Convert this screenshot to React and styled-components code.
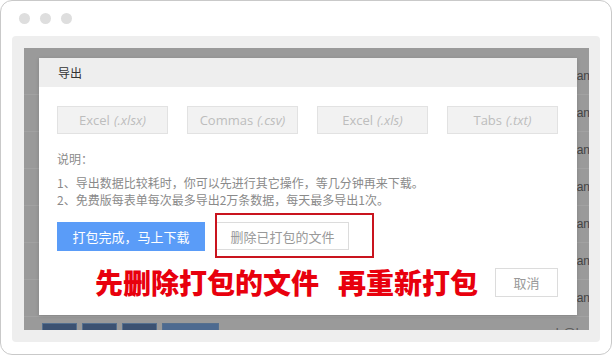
import React from 'react'
import styled, { createGlobalStyle } from 'styled-components'

const GlobalStyle = createGlobalStyle`
    html, body {
        margin: 0;
        padding: 0;
        background: #fff;
    }
    body {
        font-family: "Noto Sans CJK SC", "Noto Sans", sans-serif;
    }
`

const Frame = styled.div`
    width: 612px;
    height: 355px;
    box-sizing: border-box;
    border: 1px solid #c9c9c9;
    border-radius: 12px;
    background: #fff;
    display: flex;
    flex-direction: column;
    overflow: hidden;
`

const TitleBar = styled.div`
    height: 35px;
    flex: none;
    display: flex;
    align-items: center;
    gap: 10px;
    padding-left: 18px;
`

const Dot = styled.span`
    width: 11px;
    height: 11px;
    border-radius: 50%;
    background: #dedede;
`

const Panel = styled.div`
    margin: 0 11px;
    height: 306px;
    box-sizing: border-box;
    padding: 12px 11px 12px 12px;
    background: #eeeeee;
    border-radius: 4px;
`

const Screen = styled.div`
    position: relative;
    height: 282px;
    background: #9a9a9a;
    overflow: hidden;
    padding-top: 10px;
    box-sizing: border-box;
`

const Row = styled.div`
    height: 37px;
    box-sizing: border-box;
    border-bottom: 1px solid #a2a2a2;
    display: flex;
    align-items: center;
    justify-content: flex-end;
    font-family: "Liberation Sans", sans-serif;
    font-size: 12px;
    color: #444;
    margin-right: -1px;
`

const Toolbar = styled.div`
    margin-top: 6px;
    display: flex;
    align-items: flex-start;
    padding-left: 18px;
    gap: 5px;
    height: 24px;
`

const ToolButton = styled.div`
    width: ${p => p.$w}px;
    height: 24px;
    background: ${p => (p.$light ? '#4d6a90' : '#3c5272')};
    border: 1px solid #55708f;
    box-sizing: border-box;
`

const ToolText = styled.span`
    margin-left: 100px;
    margin-top: 3px;
    font-size: 13px;
    color: #555;
`

const ToolIcons = styled.span`
    margin-left: auto;
    margin-right: 10px;
    margin-top: 2px;
    font-size: 13px;
    color: #555;
    font-family: "Liberation Sans", sans-serif;
`

const Dialog = styled.div`
    position: absolute;
    left: 15px;
    top: 10px;
    width: 538px;
    height: 257px;
    background: #fff;
    box-shadow: 0 1px 4px rgba(0, 0, 0, 0.15);
    display: flex;
    flex-direction: column;
`

const DialogHeader = styled.div`
    height: 29px;
    flex: none;
    background: #eeeeee;
    padding-left: 19px;
    display: flex;
    align-items: center;
    font-size: 12px;
    color: #333;
`

const DialogBody = styled.div`
    position: relative;
    padding: 19px 19px 0 18px;
`

const FormatGrid = styled.div`
    display: grid;
    grid-template-columns: repeat(4, 111px);
    column-gap: 19px;
`

const FormatButton = styled.div`
    height: 28px;
    box-sizing: border-box;
    background: #f2f2f2;
    border: 1px solid #e2e2e2;
    display: flex;
    align-items: center;
    justify-content: center;
    gap: 4px;
    font-family: "Open Sans", "Noto Sans", sans-serif;
    font-size: 13px;
    color: #bdbdbd;

    em {
        font-style: italic;
    }
`

const Notes = styled.div`
    margin-top: 16px;
    font-size: 12px;
    line-height: 17px;
    color: #8a8a8a;
`

const NotesTitle = styled.div`
    margin-bottom: 7px;
`

const Actions = styled.div`
    margin-top: 14px;
    display: flex;
    align-items: flex-start;
    gap: 11px;
`

const PrimaryButton = styled.div`
    width: 148px;
    height: 29px;
    background: #5a9cf8;
    color: #fff;
    font-size: 13px;
    display: flex;
    align-items: center;
    justify-content: center;
`

const GhostButton = styled.div`
    width: ${p => p.$w}px;
    height: ${p => p.$h}px;
    box-sizing: border-box;
    border: 1px solid #dcdcdc;
    background: #fff;
    color: #999;
    font-size: 13px;
    display: flex;
    align-items: center;
    justify-content: center;
`

const Mark = styled.div`
    position: absolute;
    left: 176px;
    top: 126px;
    width: 159px;
    height: 45px;
    box-sizing: border-box;
    border: 2px solid #c9141e;
`

const Footer = styled.div`
    margin-top: 17px;
    display: flex;
    align-items: center;
`

const Hint = styled.div`
    margin-left: 38px;
    font-size: 28px;
    font-weight: 900;
    color: #e8000d;
    line-height: 29px;
    display: flex;
    gap: 19px;
`

const Spacer = styled.div`
    flex: 1;
`

const formats = [
    ['Excel', '(.xlsx)'],
    ['Commas', '(.csv)'],
    ['Excel', '(.xls)'],
    ['Tabs', '(.txt)'],
]

export default function App() {
    return (
        <>
            <GlobalStyle />
            <Frame>
                <TitleBar>
                    <Dot />
                    <Dot />
                    <Dot />
                </TitleBar>
                <Panel>
                    <Screen>
                        {Array.from({ length: 7 }).map((_, i) => (
                            <Row key={i}>Jordan</Row>
                        ))}
                        <Toolbar>
                            <ToolButton $w={35} />
                            <ToolButton $w={35} />
                            <ToolButton $w={35} />
                            <ToolButton $w={57} $light />
                            <ToolText>帮助学院</ToolText>
                            <ToolIcons>| @|</ToolIcons>
                        </Toolbar>
                        <Dialog>
                            <DialogHeader>导出</DialogHeader>
                            <DialogBody>
                                <FormatGrid>
                                    {formats.map(([name, ext], i) => (
                                        <FormatButton key={i}>
                                            {name} <em>{ext}</em>
                                        </FormatButton>
                                    ))}
                                </FormatGrid>
                                <Notes>
                                    <NotesTitle>说明：</NotesTitle>
                                    <div>1、导出数据比较耗时，你可以先进行其它操作，等几分钟再来下载。</div>
                                    <div>2、免费版每表单每次最多导出2万条数据，每天最多导出1次。</div>
                                </Notes>
                                <Actions>
                                    <PrimaryButton>打包完成，马上下载</PrimaryButton>
                                    <GhostButton $w={133} $h={28}>删除已打包的文件</GhostButton>
                                </Actions>
                                <Mark />
                                <Footer>
                                    <Hint>
                                        <span>先删除打包的文件</span>
                                        <span>再重新打包</span>
                                    </Hint>
                                    <Spacer />
                                    <GhostButton $w={63} $h={29}>取消</GhostButton>
                                </Footer>
                            </DialogBody>
                        </Dialog>
                    </Screen>
                </Panel>
            </Frame>
        </>
    )
}
